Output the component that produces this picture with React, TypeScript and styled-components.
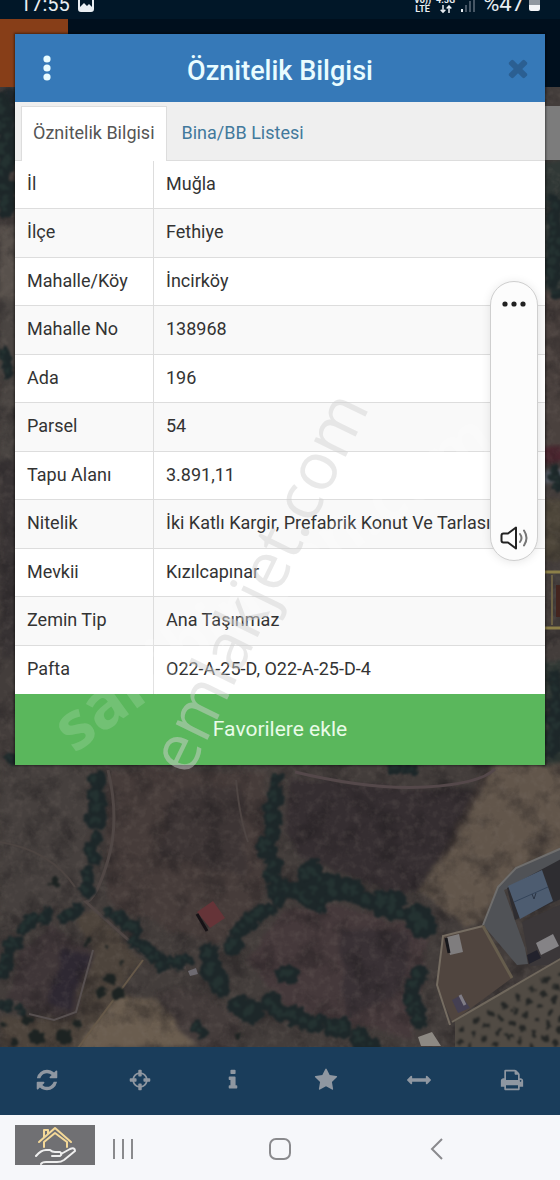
import React from 'react';
import styled, { createGlobalStyle } from 'styled-components';

const GlobalStyle = createGlobalStyle`
  * { box-sizing: border-box; }
  body { margin: 0; background: #f6f7fa; font-family: Roboto, sans-serif; }
  button { font: inherit; border: 0; padding: 0; background: none; cursor: pointer; }
`;

const Page = styled.div`
  min-height: 100vh;
  display: flex;
  flex-direction: column;
  overflow: hidden;
`;

/* ---------- status bar ---------- */

const StatusBar = styled.header`
  height: 19px;
  padding: 0 19px 5px 20px;
  display: flex;
  justify-content: space-between;
  align-items: flex-end;
  overflow: hidden;
  background: #011728;
  color: #e9eef2;
`;

const StatusGroup = styled.div<{ $gap: number }>`
  display: flex;
  align-items: flex-end;
  gap: ${(p) => p.$gap}px;
`;

const Clock = styled.span`
  font-size: 20px;
  line-height: 20px;
`;

const Percent = styled.span`
  font-size: 22px;
  line-height: 20px;
  margin-left: 2px;
`;

const NetLabel = styled.span`
  display: flex;
  flex-direction: column;
  align-items: center;
  font-size: 9px;
  line-height: 9px;
  font-weight: 700;
`;

/* ---------- stage: map behind, dialog in front ---------- */

const Stage = styled.main`
  flex: 1;
  position: relative;
  display: grid;
  grid-template: 1fr / 1fr;
  align-items: start;

  & > * { grid-area: 1 / 1; }
`;

const Backdrop = styled.div`
  height: 100%;
  display: flex;
  flex-direction: column;
  background: #383131;
`;

const AppBar = styled.div`
  height: 68px;
  flex: none;
  background: #000f1d;
`;

const AppBadge = styled.div`
  width: 68px;
  height: 100%;
  background: #873e18;
`;

const MapArea = styled.div`
  flex: 1;
  position: relative;
  min-height: 0;

  svg { position: absolute; width: 100%; height: 100%; }
`;

const MapControl = styled.div`
  position: absolute;
  right: 0;
  top: 19px;
  width: 30px;
  height: 54px;
  background: #7c7c7c;
`;

/* ---------- dialog ---------- */

const Dialog = styled.section`
  position: relative;
  margin: 15px 15px 0;
  background: #fff;
  box-shadow: 0 0 2px 1px rgba(0, 0, 0, 0.45);
`;

const DialogHeader = styled.header`
  height: 68px;
  padding: 0 16px;
  display: grid;
  grid-template-columns: 32px 1fr 22px;
  align-items: center;
  background: #3679b8;
`;

const Title = styled.h1`
  margin: 6px 0 0;
  padding-right: 10px;
  font-size: 27px;
  line-height: 32px;
  font-weight: 500;
  text-align: center;
  color: #e9fcff;
`;

const IconButton = styled.button<{ $color: string }>`
  display: flex;
  justify-content: center;
  align-items: center;
  color: ${(p) => p.$color};

  svg { flex: none; }
`;

const Tabs = styled.div`
  display: flex;
  height: 59px;
  padding: 4px 6px 0;
  background: #efefef;
  border-bottom: 1px solid #ddd;
`;

const Tab = styled.button<{ $active?: boolean }>`
  height: 55px;
  padding: 0 11px 2px;
  font-size: 18px;
  line-height: 24px;
  white-space: nowrap;
  color: ${(p) => (p.$active ? '#555' : '#42799c')};
  background: ${(p) => (p.$active ? '#fff' : 'transparent')};
  border: 1px solid ${(p) => (p.$active ? '#ddd' : 'transparent')};
  border-bottom: 0;
  margin-right: 3px;
`;

const Table = styled.table`
  width: 100%;
  table-layout: fixed;
  border-spacing: 0;
  font-size: 18px;
  line-height: 24px;
  color: #333;
`;

const Row = styled.tr`
  height: 48px;
  &:nth-child(even) { height: 49px; background: #f9f9f9; }
  &:not(:last-child) > * { border-bottom: 1px solid #ddd; }
`;

const Key = styled.th`
  width: 139px;
  padding: 0 0 2px 12px;
  text-align: left;
  font-weight: 400;
  border-right: 1px solid #ddd;
`;

const Value = styled.td`
  padding: 0 0 2px 12px;
  white-space: nowrap;
`;

const FavouriteButton = styled.button`
  display: block;
  width: 100%;
  height: 71px;
  padding-bottom: 2px;
  font-size: 21px;
  background: #5ab75c;
  color: #e9fbe8;
`;

const Watermark = styled.span<{ $tone: string; $angle: number; $weight: number; $x: number; $y: number }>`
  position: absolute;
  left: ${(p) => p.$x}px;
  top: ${(p) => p.$y}px;
  transform: translate(-50%, -50%) rotate(${(p) => p.$angle}deg);
  font-family: 'Open Sans', sans-serif;
  font-size: 66px;
  line-height: 66px;
  font-weight: ${(p) => p.$weight};
  color: ${(p) => p.$tone};
  white-space: nowrap;
  pointer-events: none;
`;

/* ---------- floating volume panel ---------- */

const VolumePanel = styled.aside`
  position: absolute;
  top: 262px;
  right: 22px;
  width: 48px;
  height: 280px;
  padding: 12px 0 8px;
  display: flex;
  flex-direction: column;
  justify-content: space-between;
  align-items: center;
  border: 1px solid #cfcfcf;
  border-radius: 24px;
  background: #fcfcfc;
  box-shadow: 0 1px 10px rgba(0, 0, 0, 0.1);
`;

/* ---------- bottom bars ---------- */

const Toolbar = styled.nav`
  height: 68px;
  padding: 0 2px 2px 0;
  display: grid;
  grid-template-columns: repeat(6, 1fr);
  background: #1a3d5b;
`;

const SystemNav = styled.nav`
  position: relative;
  height: 65px;
  padding: 2px 18% 0;
  display: flex;
  justify-content: space-between;
  align-items: center;
  background: #f6f7fa;
`;

const NavButton = styled.button`
  width: 44px;
  height: 44px;
  display: flex;
  justify-content: center;
  align-items: center;
`;

const LogoStamp = styled.div`
  position: absolute;
  left: 15px;
  top: 10px;
  width: 80px;
  height: 40px;
  background: #707073;
`;

/* ---------- icons ---------- */

const glyphs = {
  refresh:
    'M1639 1056q0 5-1 7-64 268-268 434.5t-478 166.5q-146 0-282.5-55t-243.5-157l-129 129q-19 19-45 19t-45-19-19-45v-448q0-26 19-45t45-19h448q26 0 45 19t19 45-19 45l-137 137q71 66 161 102t187 36q134 0 250-65t186-179q11-17 53-117 8-23 30-23h192q13 0 22.5 9.5t9.5 22.5zm25-800v448q0 26-19 45t-45 19h-448q-26 0-45-19t-19-45 19-45l138-138q-148-137-349-137-134 0-250 65t-186 179q-11 17-53 117-8 23-30 23h-199q-13 0-22.5-9.5t-9.5-22.5v-7q65-268 270-434.5t480-166.5q146 0 284 55.5t245 156.5l130-129q19-19 45-19t45 19 19 45z',
  crosshairs:
    'M1325 1024h-109q-26 0-45-19t-19-45v-128q0-26 19-45t45-19h109q-32-108-112.5-188.5t-188.5-112.5v109q0 26-19 45t-45 19h-128q-26 0-45-19t-19-45v-109q-108 32-188.5 112.5t-112.5 188.5h109q26 0 45 19t19 45v128q0 26-19 45t-45 19h-109q32 108 112.5 188.5t188.5 112.5v-109q0-26 19-45t45-19h128q26 0 45 19t19 45v109q108-32 188.5-112.5t112.5-188.5zm339-192v128q0 26-19 45t-45 19h-143q-37 161-154.5 278.5t-278.5 154.5v143q0 26-19 45t-45 19h-128q-26 0-45-19t-19-45v-143q-161-37-278.5-154.5t-154.5-278.5h-143q-26 0-45-19t-19-45v-128q0-26 19-45t45-19h143q37-161 154.5-278.5t278.5-154.5v-143q0-26 19-45t45-19h128q26 0 45 19t19 45v143q161 37 278.5 154.5t154.5 278.5h143q26 0 45 19t19 45z',
  info:
    'M1216 1344v128q0 26-19 45t-45 19h-512q-26 0-45-19t-19-45v-128q0-26 19-45t45-19h64v-384h-64q-26 0-45-19t-19-45v-128q0-26 19-45t45-19h384q26 0 45 19t19 45v576h64q26 0 45 19t19 45zm-128-1152v192q0 26-19 45t-45 19h-256q-26 0-45-19t-19-45v-192q0-26 19-45t45-19h256q26 0 45 19t19 45z',
  star:
    'M1728 647q0 22-26 48l-363 354 86 500q1 7 1 20 0 21-10.5 35.5t-30.5 14.5q-19 0-40-12l-449-236-449 236q-22 12-40 12-21 0-31.5-14.5t-10.5-35.5q0-6 2-20l86-500-364-354q-25-27-25-48 0-37 56-46l502-73 225-455q19-41 49-41t49 41l225 455 502 73q56 9 56 46z',
  arrows:
    'M1792 896q0 26-19 45l-256 256q-19 19-45 19t-45-19-19-45v-128h-1024v128q0 26-19 45t-45 19-45-19l-256-256q-19-19-19-45t19-45l256-256q19-19 45-19t45 19 19 45v128h1024v-128q0-26 19-45t45-19 45 19l256 256q19 19 19 45z',
  print:
    'M448 1536h896v-256h-896v256zm0-640h896v-384h-160q-40 0-68-28t-28-68v-160h-640v640zm1152 64q0-26-19-45t-45-19-45 19-19 45 19 45 45 19 45-19 19-45zm128 0v416q0 13-9.5 22.5t-22.5 9.5h-224v160q0 40-28 68t-68 28h-960q-40 0-68-28t-28-68v-160h-224q-13 0-22.5-9.5t-9.5-22.5v-416q0-79 56.5-135.5t135.5-56.5h64v-544q0-40 28-68t68-28h672q40 0 88 20t76 48l152 152q28 28 48 76t20 88v256h64q79 0 135.5 56.5t56.5 135.5z',
  times:
    'M1490 1322q0 40-28 68l-136 136q-28 28-68 28t-68-28l-294-294-294 294q-28 28-68 28t-68-28l-136-136q-28-28-28-68t28-68l294-294-294-294q-28-28-28-68t28-68l136-136q28-28 68-28t68 28l294 294 294-294q28-28 68-28t68 28l136 136q28 28 28 68t-28 68l-294 294 294 294q28 28 28 68z',
};

const Glyph = ({ name, size = 24 }: { name: keyof typeof glyphs; size?: number }) => (
  <svg width={size} height={size} viewBox="0 0 1792 1792" fill="currentColor" aria-hidden="true">
    <path d={glyphs[name]} />
  </svg>
);

/* ---------- satellite map ---------- */

type Point = [number, number];

const jitter = (n: number) => {
  const v = Math.sin(n * 127.1) * 43758.5453;
  return v - Math.floor(v);
};

const Hedge = ({ points, r }: { points: Point[]; r: number }) => {
  const crowns: React.ReactNode[] = [];
  const lights: React.ReactNode[] = [];
  points.slice(1).forEach(([x2, y2], i) => {
    const [x1, y1] = points[i];
    const steps = Math.max(1, Math.round(Math.hypot(x2 - x1, y2 - y1) / (r * 0.6)));
    for (let s = 0; s <= steps; s++) {
      const seed = x1 + y1 * 3 + s * 7 + i;
      const cx = x1 + ((x2 - x1) * s) / steps + (jitter(seed) - 0.5) * r;
      const cy = y1 + ((y2 - y1) * s) / steps + (jitter(seed + 5) - 0.5) * r;
      const rr = r * (0.55 + jitter(seed + 9) * 0.5);
      crowns.push(<circle key={`${i}-${s}`} cx={cx} cy={cy} r={rr} fill="#1d2729" />);
      lights.push(<circle key={`${i}-${s}`} cx={cx - 2} cy={cy - 1} r={rr * 0.4} fill="#243231" />);
    }
  });
  return (
    <g>
      {crowns}
      {lights}
    </g>
  );
};

const hedges: { points: Point[]; r: number }[] = [
  { points: [[95, 775], [98, 795], [98, 824]], r: 9 },
  { points: [[94, 840], [92, 858]], r: 9 },
  { points: [[89, 875], [84, 892]], r: 9 },
  { points: [[274, 775], [272, 820], [268, 850], [276, 895]], r: 9 },
  { points: [[276, 905], [250, 920], [232, 950]], r: 9 },
  { points: [[108, 911], [132, 926], [145, 950], [165, 962], [190, 960]], r: 7 },
  { points: [[207, 955], [216, 975], [218, 990]], r: 11 },
  { points: [[300, 868], [320, 885], [350, 893], [385, 902], [420, 915], [425, 930]], r: 12 },
  { points: [[281, 885], [300, 898], [325, 905]], r: 9 },
  { points: [[45, 913], [25, 925], [10, 950], [2, 975]], r: 8 },
  { points: [[0, 1003], [20, 1010]], r: 6 },
  { points: [[65, 915], [78, 912]], r: 7 },
  { points: [[244, 1004], [249, 1014]], r: 14 },
  { points: [[268, 1003], [285, 1012], [310, 1022], [340, 1025], [370, 1040]], r: 10 },
  { points: [[416, 975], [414, 1000], [416, 1020]], r: 9 },
  { points: [[285, 970], [293, 972]], r: 9 },
  { points: [[195, 1030], [203, 1033]], r: 8 },
  { points: [[390, 768], [415, 770]], r: 5 },
  { points: [[2, 100], [4, 125], [6, 150], [6, 190], [4, 215]], r: 10 },
  { points: [[554, 200], [558, 230], [556, 270], [554, 290]], r: 8 },
  { points: [[2, 350], [8, 370]], r: 6 },
  { points: [[554, 470], [558, 485]], r: 5 },
  { points: [[552, 680], [556, 720], [552, 750]], r: 9 },
  { points: [[6, 755], [14, 762]], r: 8 },
];

const shrubs: [number, number, number][] = [
  [55, 882, 5], [110, 979, 6], [100, 993, 6], [118, 993, 6], [37, 1037, 8], [64, 1037, 8], [27, 1020, 5],
  [77, 1024, 5], [87, 942, 4], [107, 947, 2], [122, 963, 2], [14, 1042, 4], [238, 1036, 4], [3, 1026, 3],
];

const orchard: Point[] = [];
for (let row = 0; row < 8; row++) {
  for (let col = 0; col < 10; col++) {
    const x = 462 + col * 14 - row * 3;
    const y = 1028 - col * 8 + row * 13;
    if (x < 566 && x > 455 && y < 1047) orchard.push([x, y]);
  }
}

const SatelliteMap = () => (
  <svg viewBox="0 87 560 960" preserveAspectRatio="xMidYMax slice" colorInterpolationFilters="sRGB" aria-hidden="true">
    <defs>
      <filter id="fields" x="-5%" y="-5%" width="110%" height="110%">
        <feTurbulence type="fractalNoise" baseFrequency="0.05" numOctaves={3} seed={2} result="n" />
        <feDisplacementMap in="SourceGraphic" in2="n" scale={10} xChannelSelector="R" yChannelSelector="G" />
        <feGaussianBlur stdDeviation={2} />
      </filter>
      <filter id="ragged" x="-5%" y="-5%" width="110%" height="110%">
        <feTurbulence type="fractalNoise" baseFrequency="0.16" numOctaves={2} seed={4} result="n" />
        <feDisplacementMap in="SourceGraphic" in2="n" scale={9} xChannelSelector="R" yChannelSelector="G" />
        <feGaussianBlur stdDeviation={1} />
      </filter>
      <filter id="shade" x="0" y="0" width="100%" height="100%">
        <feTurbulence type="fractalNoise" baseFrequency="0.04" numOctaves={5} seed={8} />
        <feColorMatrix values="0 0 0 0 0.1  0 0 0 0 0.09  0 0 0 0 0.1  2.2 0 0 0 -1" />
      </filter>
      <filter id="light" x="0" y="0" width="100%" height="100%">
        <feTurbulence type="fractalNoise" baseFrequency="0.13" numOctaves={3} seed={21} />
        <feColorMatrix values="0 0 0 0 0.5  0 0 0 0 0.46  0 0 0 0 0.43  0 2 0 0 -0.9" />
      </filter>
      <filter id="soft">
        <feGaussianBlur stdDeviation={0.7} />
      </filter>
    </defs>
    <rect y="87" width="560" height="960" fill="#433d3b" />

    <g filter="url(#fields)">
      <path d="M0 87h30v60H0z" fill="#20282c" />
      <path d="M0 225h30v75H0z" fill="#58514c" />
      <path d="M0 300h30v160H0z" fill="#4a4542" />
      <path d="M0 460h30v200H0z" fill="#383334" />
      <path d="M535 160h30v130h-30z" fill="#303836" />
      <path d="M535 290h30v160h-30z" fill="#4a413e" />
      <path d="M535 448h30v14h-30z" fill="#4d2630" />
      <path d="M535 470h30v12h-30z" fill="#5f6570" />
      <path d="M535 500h30v60h-30z" fill="#4d463a" />
      <path d="M535 660h30v110h-30z" fill="#2b3431" />
      <path d="M0 760h92l-6 140-40 12-46 30z" fill="#46403e" />
      <path d="M106 770h160l-4 130-45 45-110-40z" fill="#463c3a" />
      <path d="M175 790l65-5 8 90-90-20z" fill="#3d3535" />
      <path d="M290 778l190 14-60 95-20 8-100-38-15-30z" fill="#352e31" />
      <path d="M480 775l18-8-55 130-20-8z" fill="#3b3331" />
      <path d="M495 764h70v85l-50 20-27 50-20 8-50-38 32-40z" fill="#62564b" />
      <path d="M283 910l50-5 95 25-15 110-125-30-40-50z" fill="#45393b" />
      <path d="M340 930l70 0-5 60-60 30z" fill="#393135" />
      <path d="M52 925l40 27-17 63-23 4-46-20 14-48z" fill="#3f3638" />
      <path d="M62 950l28 5-22 55-18-6z" fill="#2e2832" />
      <path d="M75 915l20-5 47 50-67 90H0v-32h60l15-3 17-62z" fill="#4d443c" />
      <path d="M76 1050l38-52 40 0 50 50z" fill="#6a5d4f" />
      <path d="M152 990l50 0 40 30-10 30h-35z" fill="#443c3b" />
    </g>

    <rect y="87" width="560" height="960" filter="url(#shade)" opacity="0.5" />
    <rect y="87" width="560" height="960" filter="url(#light)" opacity="0.22" />

    <g filter="url(#soft)" fill="none">
      <path d="M108 770q12 50 0 90t-22 42l58 52 42 14" stroke="#504745" strokeWidth="3" />
      <path d="M236 780q4 40 12 62" stroke="#4e4543" strokeWidth="2" />
      <path d="M295 772q75 18 130 15t70-18" stroke="#54484a" strokeWidth="3" />
      <path d="M143 960l-65 88" stroke="#665949" strokeWidth="2" />
      <path d="M0 842q50 8 75 45" stroke="#4d4542" strokeWidth="2" />
      <path d="M93 950l-17 62-22 8-25-6" stroke="#575050" strokeWidth="2" />
      <path d="M544 572h18M544 628h18" stroke="#8c7f49" strokeWidth="3" />
      <path d="M552 575v50" stroke="#6c6144" strokeWidth="2" />
      <path d="M556 585h6v32h-6z" fill="#43251f" />
    </g>

    <g filter="url(#soft)">
      <path d="M562 848l-46 20-18 19-15 38 34 40 11-1-3-16-21-58 56-24z" fill="#505256" />
      <path d="M562 848l-46 20-18 19-15 38" fill="none" stroke="#6f6e6d" strokeWidth="2" />
      <path d="M507 888l8 32 48-22v-40z" fill="#2e2d31" />
      <path d="M508 886l34-16 11 31-33 18z" fill="#4d5c70" />
      <path d="M514 902l34-15" stroke="#34445a" strokeWidth="1" />
      <path d="M532 894l2 5 2-6" stroke="#2b3545" strokeWidth="1" fill="none" />
      <path d="M522 922l40-18v60l-32 2z" fill="#3b3739" />
      <path d="M536 943l17-9 6 12-18 9z" fill="#858386" />
      <path d="M527 955l10-5 4 8-12 6z" fill="#22222c" />
      <path d="M443 936l40-10 29 52-60 44-15-36z" fill="#50453f" />
      <path d="M450 1025l-13-40 6-49 40-10" fill="none" stroke="#756c61" strokeWidth="2" />
      <path d="M483 926l29 52" stroke="#665d4d" strokeWidth="3" />
      <path d="M447 937l12-3 4 18-13 3z" fill="#7f7d7e" />
      <path d="M446 938l3 15" stroke="#17171b" strokeWidth="3" />
      <path d="M452 1000l9-5 9 13-12 5z" fill="#443f52" />
      <path d="M460 995l5 10" stroke="#807d86" strokeWidth="3" />
      <path d="M455 1020l107-62v92h-107z" fill="#514b44" />
      <path d="M452 1022l110-64" stroke="#6f675c" strokeWidth="2" />
      <path d="M418 1037l14-5 9 14h-20z" fill="#8d8983" />
      <path d="M197 912l16-11 12 17-15 10z" fill="#653438" />
      <path d="M197 914l10 17" stroke="#161216" strokeWidth="3" />
      <path d="M188 971l8-3 2 6-8 2z" fill="#6d6a70" />
    </g>

    <g filter="url(#ragged)">
      {orchard.map(([x, y], i) => (
        <circle key={i} cx={x} cy={y + 1} r={3} fill="#242625" />
      ))}
      {hedges.map((h, i) => (
        <Hedge key={i} {...h} />
      ))}
      {shrubs.map(([x, y, r], i) => (
        <circle key={i} cx={x} cy={y} r={r} fill="#1d2322" />
      ))}
    </g>
  </svg>
);

/* ---------- data ---------- */

const attributes: [string, string][] = [
  ['İl', 'Muğla'],
  ['İlçe', 'Fethiye'],
  ['Mahalle/Köy', 'İncirköy'],
  ['Mahalle No', '138968'],
  ['Ada', '196'],
  ['Parsel', '54'],
  ['Tapu Alanı', '3.891,11'],
  ['Nitelik', 'İki Katlı Kargir, Prefabrik Konut Ve Tarlası'],
  ['Mevkii', 'Kızılcapınar'],
  ['Zemin Tip', 'Ana Taşınmaz'],
  ['Pafta', 'O22-A-25-D, O22-A-25-D-4'],
];

const tools: { name: keyof typeof glyphs; label: string }[] = [
  { name: 'refresh', label: 'Yenile' },
  { name: 'crosshairs', label: 'Konum' },
  { name: 'info', label: 'Bilgi' },
  { name: 'star', label: 'Favoriler' },
  { name: 'arrows', label: 'Ölçüm' },
  { name: 'print', label: 'Yazdır' },
];

export default function App() {
  return (
    <Page>
      <GlobalStyle />
      <StatusBar>
        <StatusGroup $gap={8}>
          <Clock>17:55</Clock>
          <svg width="17" height="18" viewBox="0 0 17 18" aria-hidden="true">
            <rect x="1" y="1" width="14" height="14" rx="2" fill="none" stroke="#e9eef2" strokeWidth="2" />
            <path d="M2 14v-3l4-4 3 3 2-2 4 4v2z" fill="#e9eef2" />
          </svg>
        </StatusGroup>
        <StatusGroup $gap={5}>
          <NetLabel>
            <span>Vo))</span>
            <span>LTE</span>
          </NetLabel>
          <NetLabel>
            <span>4.5G</span>
            <svg width="12" height="9" viewBox="0 0 12 9" fill="none" stroke="#e9eef2" strokeWidth="1.5" aria-hidden="true">
              <path d="M3 0v7M.7 4.700 3 7.200l2.300-2.500M9 8V1M6.700 3.500 9 1l2.300 2.500" />
            </svg>
          </NetLabel>
          <svg width="16" height="18" viewBox="0 0 16 18" aria-hidden="true">
            <path d="M1 13h2v3H1z" fill="#e9eef2" />
            <path d="M5 9h2v7H5zM9 5h2v11H9zM13 1h2v15h-2z" fill="#465665" />
          </svg>
          <Percent>%47</Percent>
          <svg width="12" height="20" viewBox="0 0 12 20" aria-hidden="true">
            <path d="M0 0h11v12H0z" fill="#9098a0" />
            <path d="M0 11h11v4q0 2-2 2H2q-2 0-2-2z" fill="#f3f5f7" />
          </svg>
        </StatusGroup>
      </StatusBar>

      <Stage>
        <Backdrop>
          <AppBar>
            <AppBadge />
          </AppBar>
          <MapArea>
            <SatelliteMap />
            <MapControl />
          </MapArea>
        </Backdrop>

        <Dialog aria-label="Öznitelik Bilgisi">
          <DialogHeader>
            <IconButton $color="#e9fcff" aria-label="Menü">
              <svg width="8" height="28" viewBox="0 0 8 28" fill="currentColor" aria-hidden="true">
                <circle cx="4" cy="5" r="3.600" />
                <circle cx="4" cy="14" r="3.600" />
                <circle cx="4" cy="23" r="3.600" />
              </svg>
            </IconButton>
            <Title>Öznitelik Bilgisi</Title>
            <IconButton $color="#2b5f92" aria-label="Kapat">
              <Glyph name="times" size={28} />
            </IconButton>
          </DialogHeader>

          <Tabs role="tablist">
            <Tab role="tab" aria-selected="true" $active>
              Öznitelik Bilgisi
            </Tab>
            <Tab role="tab" aria-selected="false">
              Bina/BB Listesi
            </Tab>
          </Tabs>

          <Table>
            <tbody>
              {attributes.map(([key, value]) => (
                <Row key={key}>
                  <Key scope="row">{key}</Key>
                  <Value>{value}</Value>
                </Row>
              ))}
            </tbody>
          </Table>

          <FavouriteButton>Favorilere ekle</FavouriteButton>

          <Watermark $tone="rgba(255,255,255,0.15)" $angle={-36} $weight={700} $x={256} $y={545}>
            sahibinden.com
          </Watermark>
          <Watermark $tone="rgba(208,208,208,0.48)" $angle={-64} $weight={400} $x={241} $y={547}>
            emlakjet.com
          </Watermark>
        </Dialog>

        <VolumePanel>
          <IconButton $color="#222" aria-label="Diğer seçenekler">
            <svg width="26" height="20" viewBox="0 0 26 20" fill="currentColor" aria-hidden="true">
              <circle cx="4" cy="10" r="2.600" />
              <circle cx="13" cy="10" r="2.600" />
              <circle cx="22" cy="10" r="2.600" />
            </svg>
          </IconButton>
          <IconButton $color="#222" aria-label="Ses">
            <svg width="28" height="28" viewBox="0 0 28 28" fill="none" stroke="currentColor" strokeWidth="2" strokeLinejoin="round" strokeLinecap="round" aria-hidden="true">
              <path d="M16 3.500v21L8 18.500H3.500q-2 0-2-2v-5q0-2 2-2H8z" />
              <path d="M20 10q3 4 0 8M24 6.500q5 7.500 0 15" stroke="#777" />
            </svg>
          </IconButton>
        </VolumePanel>
      </Stage>

      <Toolbar>
        {tools.map((t) => (
          <IconButton key={t.name} $color="#8f97a1" aria-label={t.label}>
            <Glyph name={t.name} />
          </IconButton>
        ))}
      </Toolbar>

      <SystemNav>
        <LogoStamp>
          <svg width="80" height="40" viewBox="0 0 80 40" fill="none" strokeWidth="2" strokeLinejoin="round" strokeLinecap="round" aria-hidden="true">
            <g stroke="#f5d998">
              <path d="M24 17 40 3l16 14M29 12V5h4v4" />
              <path d="M29 22v-5l11-9 12 9v5" />
            </g>
            <g stroke="#eee">
              <path d="M21 31q5-6 10-6h4q2 2 5 2h5q3 2 0 4h-8M46 29l9-5q5-2 5 2l-11 9q-3 2-7 2H31q-4 0-5 2" />
            </g>
          </svg>
        </LogoStamp>
        <NavButton aria-label="Son uygulamalar">
          <svg width="22" height="22" viewBox="0 0 22 22" stroke="#8a8a8d" strokeWidth="2" aria-hidden="true">
            <path d="M2 1v20M11 1v20M20 1v20" />
          </svg>
        </NavButton>
        <NavButton aria-label="Ana ekran">
          <svg width="24" height="24" viewBox="0 0 24 24" fill="none" stroke="#8a8a8d" strokeWidth="2" aria-hidden="true">
            <rect x="2" y="2" width="20" height="20" rx="6" />
          </svg>
        </NavButton>
        <NavButton aria-label="Geri">
          <svg width="14" height="22" viewBox="0 0 14 22" fill="none" stroke="#8a8a8d" strokeWidth="2" aria-hidden="true">
            <path d="M12 1 2 11l10 10" />
          </svg>
        </NavButton>
      </SystemNav>
    </Page>
  );
}
